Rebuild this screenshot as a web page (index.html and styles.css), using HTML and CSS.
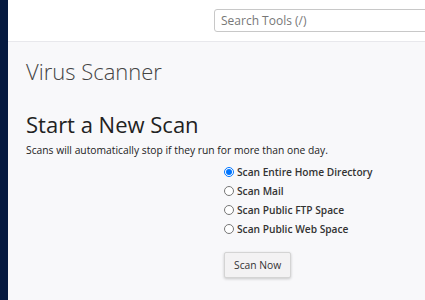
FILE: index.html
```html
<!DOCTYPE html>
<html>

<head>
    <link rel="stylesheet" href="styles.css">
</head>

<body>
    <div class="app">
        <!-- left nav strip -->
        <div class="sidebar"></div>

        <div class="main">
            <div class="top-bar">
                <input type="text" class="search-input" placeholder="Search Tools (/)">
            </div>

            <div class="content">
                <h1 class="page-title">Virus Scanner</h1>

                <h2 class="section-title">Start a New Scan</h2>
                <p class="section-desc">Scans will automatically stop if they run for more than one day.</p>

                <form class="scan-form">
                    <div class="scan-options">
                        <label class="scan-option"><input type="radio" name="scan-type" checked> Scan Entire Home Directory</label>
                        <label class="scan-option"><input type="radio" name="scan-type"> Scan Mail</label>
                        <label class="scan-option"><input type="radio" name="scan-type"> Scan Public FTP Space</label>
                        <label class="scan-option"><input type="radio" name="scan-type"> Scan Public Web Space</label>
                    </div>
                    <button type="button" class="scan-button">Scan Now</button>
                </form>
            </div>
        </div>
    </div>
</body>

</html>
```

FILE: styles.css
```css
body {
    margin: 0;
    font-family: 'Open Sans', sans-serif;
    color: #333;
    background-color: #f8f8fa;
}

.app {
    display: flex;
    min-height: 300px;
}

.sidebar {
    width: 8px;
    flex-shrink: 0;
    background-color: #061a40;
}

.main {
    flex: 1;
    min-width: 0;
    overflow: hidden;
}

/* header with search box */
.top-bar {
    height: 42px;
    box-sizing: border-box;
    background-color: #fff;
    border-bottom: 1px solid #e8e8ec;
    padding: 8px 0 0 206px;
    overflow: hidden;
}

.search-input {
    width: 240px;
    height: 23px;
    box-sizing: border-box;
    border: 1px solid #c8c8c8;
    border-radius: 3px;
    padding: 0 6px;
    font-family: 'Open Sans', sans-serif;
    font-size: 12px;
}

.search-input::placeholder {
    color: #777;
}

.content {
    padding: 0 18px;
}

.page-title {
    font-size: 22px;
    line-height: 30px;
    font-weight: 300;
    color: #444;
    margin: 14px 0 0;
}

.section-title {
    font-size: 22px;
    line-height: 30px;
    font-weight: 400;
    color: #222;
    margin: 23px 0 0;
}

.section-desc {
    font-size: 10.3px;
    color: #222;
    margin: 4px 0 0;
}

.scan-form {
    display: flex;
    flex-direction: column;
    align-items: flex-start;
    padding-left: 198px;
    margin-top: 5px;
}

.scan-options {
    display: flex;
    flex-direction: column;
}

.scan-option {
    display: flex;
    align-items: center;
    height: 19px;
    font-size: 10.2px;
    font-weight: 600;
    color: #333;
}

.scan-option input {
    width: 10px;
    height: 10px;
    margin: 0 3px 0 0;
}

.scan-button {
    margin-top: 14px;
    height: 26px;
    padding: 0 9px;
    background-color: #f3f2f3;
    border: 1px solid #d4d4d4;
    border-radius: 2px;
    box-shadow: 0 1px 3px rgba(0, 0, 0, 0.2);
    font-family: 'Open Sans', sans-serif;
    font-size: 10.3px;
    color: #333;
}
```
